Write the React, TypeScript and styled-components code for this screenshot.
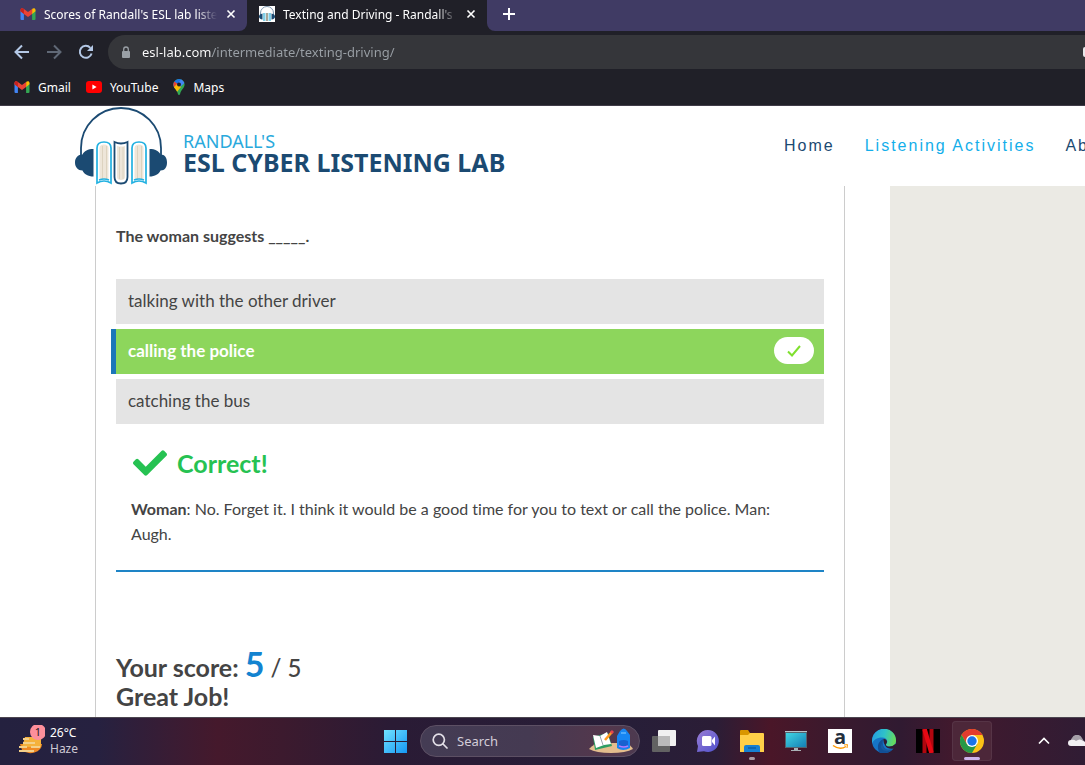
import React from 'react';
import styled, { createGlobalStyle, css } from 'styled-components';
import { FaCheck } from 'react-icons/fa';

const ui = `"Noto Sans", "Open Sans", sans-serif`;

const GlobalStyle = createGlobalStyle`
  *, *::before, *::after { box-sizing: border-box; }
  html, body { margin: 0; padding: 0; }
  body { background: #fff; overflow: hidden; font-family: Lato, sans-serif; font-variant-ligatures: none; color: #444; }
  button, input { font: inherit; color: inherit; border: 0; padding: 0; margin: 0; background: none; outline: 0; }
  svg { display: block; flex: none; }
  h1, h2, p, ul { margin: 0; padding: 0; }
`;

const Screen = styled.div`
  display: flex;
  flex-direction: column;
  height: 100vh;
  overflow: hidden;
`;

/* ---------- browser ---------- */

const Browser = styled.header`
  flex: none;
  background: #202028;
  border-bottom: 1px solid #403c48;
  color: #fff;
  font-family: ${ui};
  font-size: 12px;
  overflow: hidden;
`;

const TabStrip = styled.div`
  display: flex;
  height: 31px;
`;

const Tab = styled.div<{ $active?: boolean }>`
  display: flex;
  align-items: center;
  flex: none;
  width: ${p => (p.$active ? 240 : 247)}px;
  padding: 0 10px 3px ${p => (p.$active ? 12 : 20)}px;
  background: ${p => (p.$active ? '#202028' : '#403b64')};
  border-bottom-right-radius: ${p => (p.$active ? 0 : 8)}px;
`;

const TabTitle = styled.span`
  flex: 1;
  min-width: 0;
  margin: 0 8px;
  overflow: hidden;
  white-space: nowrap;
  mask-image: linear-gradient(to right, #000 88%, transparent 100%);
`;

const StripRest = styled.div`
  flex: 1;
  display: flex;
  align-items: center;
  padding: 0 0 3px 15px;
  background: #403b64;
  border-bottom-left-radius: 8px;
`;

const IconButton = styled.button`
  display: grid;
  place-items: center;
  flex: none;
  min-width: 12px;
  min-height: 12px;
`;

const Toolbar = styled.div`
  display: flex;
  align-items: center;
  gap: 16px;
  height: 42px;
  padding-left: 14px;
`;

const AddressBar = styled.form`
  display: flex;
  align-items: center;
  gap: 11px;
  flex: 1 0 auto;
  height: 34px;
  margin-left: -2px;
  padding-left: 13px;
  background: #35363a;
  border-radius: 17px 0 0 17px;
`;

const AddressInput = styled.input`
  flex: 1;
  min-width: 0;
  font-size: 13px;
  line-height: 20px;
  color: #e8e8ea;
  background: linear-gradient(to right, #fff 70px, #9aa0a6 70px);
  background-clip: text;
  -webkit-text-fill-color: transparent;
`;

const PillAction = styled.span`
  flex: none;
  width: 2px;
  height: 10px;
  background: #e8e8ea;
  border-radius: 2px 0 0 2px;
`;

const Bookmarks = styled.nav`
  display: flex;
  align-items: center;
  gap: 15px;
  height: 32px;
  padding: 0 0 4px 14px;
`;

const Bookmark = styled.a`
  display: flex;
  align-items: center;
  gap: 8px;
  color: #fff;
  text-decoration: none;
`;

/* ---------- site ---------- */

const Site = styled.div`
  flex: 1;
  min-height: 0;
  display: flex;
  flex-direction: column;
  overflow: hidden;
  background: #fff;
`;

const SiteHeader = styled.header`
  display: flex;
  align-items: center;
  justify-content: space-between;
  flex: none;
  height: 80px;
  padding-left: 74px;
`;

const Brand = styled.a`
  display: flex;
  align-items: center;
  gap: 15px;
  color: #1b4a72;
  text-decoration: none;
  font-family: "Noto Sans", sans-serif;
`;

const BrandText = styled.span`
  display: flex;
  flex-direction: column;
  padding-top: 12px;
  white-space: nowrap;
`;

const BrandTop = styled.span`
  font-size: 18px;
  line-height: 20px;
  color: #29a9dc;
`;

const BrandMain = styled.span`
  font-size: 25px;
  font-weight: 700;
  line-height: 23px;
`;

const SiteNav = styled.nav`
  display: flex;
  gap: 30px;
  flex: none;
  width: 301px;
  overflow: hidden;
  white-space: nowrap;
  font-family: "Liberation Sans", Arial, sans-serif;
  font-size: 16px;
  line-height: 24px;
  letter-spacing: 2px;
`;

const NavLink = styled.a<{ $current?: boolean }>`
  color: ${p => (p.$current ? '#13aeea' : '#1b4a72')};
  text-decoration: none;
`;

const Columns = styled.div`
  flex: 1;
  min-height: 0;
  display: flex;
  gap: 45px;
  padding-left: 95px;
`;

const Quiz = styled.main`
  flex: 0 1 750px;
  padding: 37px 20px 0;
  border: solid #ccc;
  border-width: 0 1px;
`;

const Sidebar = styled.aside`
  flex: 1 0 100px;
  background: #ebeae4;
`;

const Question = styled.p`
  font-size: 16px;
  font-weight: 700;
  line-height: 25px;
`;

const Options = styled.div`
  display: grid;
  gap: 5px;
  margin-top: 31px;
`;

const Option = styled.button<{ $correct?: boolean }>`
  display: flex;
  align-items: center;
  justify-content: space-between;
  height: 45px;
  padding: 0 10px 2px 12px;
  background: #e4e4e4;
  font-size: 17px;
  text-align: left;
  ${p =>
    p.$correct &&
    css`
      margin-left: -5px;
      border-left: 5px solid #1b76b8;
      background: #8dd65c;
      color: #fff;
      font-weight: 700;
    `}
`;

const Tick = styled.span`
  display: grid;
  place-items: center;
  width: 40px;
  height: 27px;
  border-radius: 14px;
  background: #fff;
`;

const Feedback = styled.section`
  padding: 21px 15px 24px;
  border-bottom: 2px solid #1e84c6;
`;

const Verdict = styled.h2`
  display: flex;
  align-items: center;
  gap: 10px;
  padding-left: 2px;
  font-size: 25px;
  line-height: 36px;
  color: #26c252;
`;

const Transcript = styled.p`
  margin-top: 15px;
  font-size: 16px;
  line-height: 25px;
`;

const Score = styled.h2`
  margin-top: 78px;
  font-size: 25px;
  line-height: 28px;
`;

const Points = styled.span`
  font-size: 34px;
  line-height: 28px;
  color: #1383d0;
`;

const Total = styled.span`
  font-size: 24px;
  font-weight: 500;
`;

/* ---------- taskbar ---------- */

const Taskbar = styled.footer`
  display: flex;
  align-items: center;
  gap: 4px;
  flex: none;
  height: 48px;
  overflow: hidden;
  box-shadow: inset 0 1px #4c4650;
  background: linear-gradient(to right, #24213f 0, #262140 9%, #45192c 20%, #3c1a2e 26%, #2a1b35 36%, #271e38 58%, #2b1d36 66%, #4a1628 71%, #3a1a2e 77%, #301a31 83%, #42192d 88%, #301c34 100%);
  font-family: ${ui};
  font-size: 12px;
  color: #fff;
`;

const Weather = styled.button`
  display: flex;
  align-items: center;
  gap: 5px;
  flex: none;
  width: 371px;
  padding-left: 17px;
  text-align: left;
  line-height: 16px;
`;

const WeatherText = styled.span`
  display: flex;
  flex-direction: column;
`;

const Muted = styled.span`
  color: #cfcad4;
`;

const TaskButton = styled.button<{ $open?: boolean; $focused?: boolean }>`
  position: relative;
  display: grid;
  place-items: center;
  flex: none;
  width: 40px;
  height: 40px;
  border-radius: 4px;
  ${p => p.$focused && css`background: #4c2739; box-shadow: inset 0 0 0 1px #563446;`}
  ${p =>
    p.$open &&
    css`
      &::after {
        content: '';
        position: absolute;
        bottom: 1px;
        width: ${p.$focused ? 16 : 6}px;
        height: 3px;
        border-radius: 2px;
        background: ${p.$focused ? '#cdb4ea' : '#a89aa4'};
      }
    `}
`;

const SearchBox = styled.label`
  display: flex;
  align-items: center;
  gap: 9px;
  flex: none;
  width: 220px;
  height: 32px;
  margin-left: 1px;
  padding: 0 5px 0 11px;
  border: 1px solid #5d5064;
  border-radius: 16px;
  background: linear-gradient(to right, #443c54, #453a52 50%, #54374c 85%, #4c3a50);
`;

const SearchInput = styled.input`
  flex: 1;
  min-width: 0;
  font-size: 13px;
  &::placeholder { color: #d3cdd8; opacity: 1; }
`;

const Tray = styled.div`
  display: flex;
  align-items: center;
  gap: 4px;
  margin-left: 28px;
`;

/* ---------- drawings ---------- */

const Gmail = () => (
  <svg width="16" height="12" viewBox="0 0 15 12">
    <path d="M0 2v9a1 1 0 0 0 1 1h2.4V4.5z" fill="#4285f4" />
    <path d="M15 2v9a1 1 0 0 1-1 1h-2.400V4.500z" fill="#34a853" />
    <path d="M11.600 1v4.900L15 3.300V2c0-1.900-2-2.400-3.400-1z" fill="#fbbc04" />
    <path d="M0 3.300V2C0 .1 2-.4 3.400 1l4.100 3 4.100-3v4.900L7.500 9 3.400 5.900z" fill="#ea4335" />
    <path d="M0 3.300V2C0 .6 1.200 0 2.300.4L3.400 1v4.900z" fill="#c5221f" />
  </svg>
);

const YouTube = () => (
  <svg width="16" height="12" viewBox="0 0 16 12">
    <rect width="16" height="12" rx="3" fill="#f00" />
    <path d="M6.400 3.500 10.600 6 6.400 8.500z" fill="#fff" />
  </svg>
);

const Maps = () => (
  <svg width="12" height="16" viewBox="0 0 12 16">
    <defs>
      <clipPath id="pin"><path d="M6 0a5.600 5.600 0 0 1 5.600 5.600c0 3.800-3.700 5.100-4.500 9.400-.2 1.300-2 1.300-2.200 0C4.100 10.700.4 9.400.4 5.600A5.600 5.600 0 0 1 6 0z" /></clipPath>
    </defs>
    <g clipPath="url(#pin)">
      <rect width="12" height="16" fill="#34a853" />
      <path d="M-1 12 12-2H0z" fill="#1a73e8" />
      <path d="M4 6 9-1h4v4L7 8z" fill="#4285f4" />
      <path d="M-1 1 5 5 0 10z" fill="#ea4335" />
      <path d="M0 9 4 5l4 3-5 6z" fill="#fbbc04" />
    </g>
    <circle cx="6" cy="5.500" r="2" fill="#202028" />
  </svg>
);

const Cross = () => (
  <svg width="10" height="10" viewBox="0 0 10 10" stroke="#fff" strokeWidth="1.600">
    <path d="m1.500 1.500 7 7m0-7-7 7" />
  </svg>
);

const Plus = () => (
  <svg width="14" height="14" viewBox="0 0 14 14" stroke="#fff" strokeWidth="2">
    <path d="M7 1v12M1 7h12" />
  </svg>
);

const Arrow = ({ forward }: { forward?: boolean }) => (
  <svg width="16" height="16" viewBox="0 0 16 16" fill="none" stroke={forward ? '#606876' : '#b4c8e6'} strokeWidth="2">
    {forward ? <path d="M1 8h13M8 1.500 14.500 8 8 14.500" /> : <path d="M15 8H2M8 1.500 1.500 8 8 14.500" />}
  </svg>
);

const Reload = () => (
  <svg width="16" height="16" viewBox="0 0 16 16">
    <path d="M13.600 9.500A6 6 0 1 1 12.300 3.800" fill="none" stroke="#b4c8e6" strokeWidth="2" />
    <path d="M15 1v6H9z" fill="#b4c8e6" />
  </svg>
);

const Lock = () => (
  <svg width="10" height="13" viewBox="0 0 10 13">
    <rect x="1" y="5" width="8" height="7" rx="1" fill="#9aa0a6" />
    <path d="M2.700 5V3.300a2.300 2.300 0 0 1 4.600 0V5" fill="none" stroke="#9aa0a6" strokeWidth="1.300" />
  </svg>
);

const Logo = () => (
  <svg width="94" height="80" viewBox="0 0 94 80">
    <path d="M7 52V42a40 40 0 0 1 80 0v10" fill="none" stroke="#1b4a72" strokeWidth="1.800" />
    <path d="M19.500 43v27.500C14 70.500 10 68 8.500 64.500 4 64.500 1 61 1 56.500s3-8 7.500-8C10 45 14 43 19.500 43z" fill="#1b4a72" />
    <path d="M75.500 43v27.500c5.500 0 9.500-2.500 11-6 4.500 0 6.500-3.500 6.500-8s-2-8-6.500-8c-1.500-3.500-5.500-5.500-11-5.500z" fill="#1b4a72" />
    <g fill="#fff" stroke="#22b1e1" strokeWidth="1.700">
      <path d="M23 77V42q0-6 7-6t7 6v35q-7-4-14 0z" />
      <path d="M58 77V42q0-6 7-6t7 6v35q-7-4-14 0z" />
    </g>
    <path d="M40.500 36q6.500 3 13 0v35q0 6.500-6.500 6.500t-6.500-6.500z" fill="#fff" stroke="#1b4a72" strokeWidth="1.800" />
    <path d="M25.500 42q0-3.500 4.500-3.500t4.500 3.500v31h-9zM60.500 42q0-3.500 4.500-3.500t4.500 3.500v31h-9zM43 40q4 1 8 0v31q0 3-4 3t-4-3z" fill="#eee6d9" />
    <path d="M28.500 40v33m4-33v33m31-33v33m4-33v33M45.500 41v32m3.500-32v32" stroke="#d8ceba" strokeWidth=".8" />
    <path d="M25 74q5-2 10 0M60 74q5-2 10 0" fill="none" stroke="#22b1e1" strokeWidth="1.500" />
  </svg>
);

const Favicon = () => (
  <svg width="16" height="16" viewBox="0 0 16 16">
    <rect width="16" height="16" fill="#fff" />
    <path d="M1.500 9V7a6.500 6.500 0 0 1 13 0v2" fill="none" stroke="#7c95ae" />
    <path d="M3.500 7.500v6Q0 13 0 10.500t3.500-3zM12.500 7.500v6Q16 13 16 10.500t-3.500-3z" fill="#1b4a72" />
    <path d="M4 7h2.500v8H4zM9.500 7H12v8H9.500z" fill="#82cfe8" />
    <path d="M7 7h2v8H7z" fill="#a8a699" />
  </svg>
);

const SmallCheck = () => (
  <svg width="14" height="12" viewBox="0 0 14 12" fill="none" stroke="#7fe02e" strokeWidth="2">
    <path d="m1 6.500 4 4L13 1" />
  </svg>
);

const HazeIcon = () => (
  <svg width="28" height="32" viewBox="0 0 28 32">
    <path d="M3 19h22a11.500 9.500 0 0 1-20 6z" fill="#f08a24" />
    <path d="M8 12h16v10H5z" fill="#f5b13b" />
    <path d="M6 14h6M6 18h12M2 22h8m4 0h9M2 26h15" stroke="#f4d08a" strokeWidth="2" />
    <circle cx="21" cy="7" r="8" fill="#fd8f9b" />
    <text x="21" y="11" textAnchor="middle" fontFamily="Noto Sans, sans-serif" fontSize="11" fill="#241820">1</text>
  </svg>
);

const WindowsIcon = () => (
  <svg width="24" height="24" viewBox="0 0 24 24">
    <defs>
      <linearGradient id="win" x1="0" y1="0" x2="1" y2="1" gradientUnits="objectBoundingBox">
        <stop offset="0" stopColor="#71e3ff" />
        <stop offset="1" stopColor="#1597f5" />
      </linearGradient>
    </defs>
    <path d="M1 1h11v11H1zM13 1h11v11H13zM1 13h11v11H1zM13 13h11v11H13z" fill="url(#win)" />
  </svg>
);

const Magnifier = () => (
  <svg width="16" height="16" viewBox="0 0 16 16" fill="none" stroke="#e4e0e8" strokeWidth="1.700" strokeLinecap="round">
    <circle cx="6.800" cy="6.800" r="5.600" />
    <path d="m11 11 4 4" />
  </svg>
);

const SchoolArt = () => (
  <svg width="46" height="26" viewBox="0 0 46 26">
    <path d="M1 21q5-6 12-6h24q6 2 8 6-7 4-22 4T1 21z" fill="#e3bd8d" />
    <path d="m5 9 7-2 8-2 4 13-17 4z" fill="#2d9d63" />
    <path d="m5 7 7 1 7-4 4 12-7 1-8 3z" fill="#fff" />
    <path d="m12 8 3 9" stroke="#9aa3ac" />
    <path d="m17 12 7-8" stroke="#ff9c1f" strokeWidth="2.500" />
    <path d="m23 5 2-2" stroke="#e7454e" strokeWidth="3" />
    <path d="M32 3q4-5 7 0l3 4v13q-7 4-13 0V8z" fill="#1685f3" />
    <path d="M31 13q5-2 9 0v6q-5 1-9 0z" fill="#1761d0" />
    <path d="M31 18q5 2 9 0" stroke="#b57bff" strokeWidth="1.500" fill="none" />
    <path d="M33 5h5" stroke="#61b7ff" strokeWidth="1.500" />
  </svg>
);

const TaskView = () => (
  <svg width="24" height="24" viewBox="0 0 24 24">
    <rect x="6" y="1" width="18" height="16" rx="1" fill="#f1f1f1" />
    <rect y="7" width="18" height="16" rx="1" fill="#626262" />
    <path d="M6 7h12v10H6z" fill="#bababa" />
  </svg>
);

const ChatIcon = () => (
  <svg width="24" height="24" viewBox="0 0 24 24">
    <defs>
      <linearGradient id="chat" x1="0" y1="0" x2="1" y2="1">
        <stop offset="0" stopColor="#9a7ed5" />
        <stop offset="1" stopColor="#4e50cd" />
      </linearGradient>
    </defs>
    <path d="M12 1a11 11 0 1 1-4 21.300L1 23l1-6A11 11 0 0 1 12 1z" fill="url(#chat)" />
    <rect x="6" y="7" width="9.500" height="10" rx="1.500" fill="#fff" />
    <path d="m16 11 3-3.500v9L16 13z" fill="#fff" />
  </svg>
);

const FolderIcon = () => (
  <svg width="24" height="24" viewBox="0 0 24 24">
    <path d="M0 2q0-1 1-1h7l2 3v4H0z" fill="#d99700" />
    <path d="M0 6h8l2-2h13q1 0 1 1v18H0z" fill="#ffcf48" />
    <path d="M4 23v-5q0-2 2-2h12q2 0 2 2v5z" fill="#1680d2" />
    <path d="M8 19h8" stroke="#0d5fa7" strokeWidth="1.500" />
  </svg>
);

const MonitorIcon = () => (
  <svg width="24" height="24" viewBox="0 0 24 24">
    <defs>
      <linearGradient id="screen" x1="0" y1="0" x2="1" y2="1">
        <stop offset="0" stopColor="#40d5e3" />
        <stop offset="1" stopColor="#157fb5" />
      </linearGradient>
    </defs>
    <path d="M1 2h22v17H1z" fill="#53626d" />
    <path d="M2 4h20v14H2z" fill="url(#screen)" />
    <path d="M1 2.500h22" stroke="#b9c3ca" />
    <path d="M10 19h4v2h3v1H7v-1h3z" fill="#aab1b6" />
  </svg>
);

const AmazonIcon = () => (
  <svg width="24" height="24" viewBox="0 0 24 24">
    <rect width="24" height="24" fill="#fff" />
    <text x="12" y="15" textAnchor="middle" fontFamily="Open Sans, sans-serif" fontWeight="700" fontSize="20" fill="#232f3e">a</text>
    <path d="M5 16.500q7 5 13 1" fill="none" stroke="#f90" strokeWidth="1.500" />
    <path d="m16 16 3.500-.4-.5 3.400" fill="none" stroke="#f90" />
  </svg>
);

const EdgeIcon = () => (
  <svg width="24" height="24" viewBox="0 0 24 24">
    <defs>
      <linearGradient id="edge" x1="0" y1=".3" x2="1" y2=".5">
        <stop offset="0" stopColor="#259ee1" />
        <stop offset=".5" stopColor="#2fc2c9" />
        <stop offset="1" stopColor="#68dc58" />
      </linearGradient>
    </defs>
    <circle cx="12" cy="12" r="12" fill="#1675c7" />
    <path d="M0 12A12 12 0 0 1 24 11.500c0 4-3 6-6.500 6-3 0-4.500-1.500-3-3 2-2.500 0-6-4.500-6C5 8.500 1 11 0 15z" fill="url(#edge)" />
    <path d="M8 24C4 19 6 12 11.500 10c-2 4-.5 11 6 11q2.500 0 4-1.500C18 24 12 25 8 24z" fill="#114f96" />
    <path d="M11.500 10C14 9.500 16 12 14.500 14.500c-1.500 1.500 0 3 3 3q3 0 5.800-2.500l1.700 1-2.500 3.500q-7 1-9-2.500-2.500-3-2-7z" fill="#301c31" />
    <path d="M10.500 13c-.5 5 3 8.300 7.500 7.500l2-.3C16 24 9 22 8.800 17z" fill="#17599f" />
  </svg>
);

const NetflixIcon = () => (
  <svg width="24" height="24" viewBox="0 0 24 24">
    <rect width="24" height="24" fill="#000" />
    <path d="M8.500 0v24M15.500 0v24" stroke="#b1060f" strokeWidth="4" />
    <path d="m8.500 0 7 24" stroke="#e50914" strokeWidth="4.500" />
  </svg>
);

const ChromeIcon = () => (
  <svg width="24" height="24" viewBox="0 0 24 24">
    <circle cx="12" cy="12" r="12" fill="#fbc116" />
    <path d="M1.600 6A12 12 0 0 1 22.400 6H12l-5.200 9z" fill="#e33b2e" />
    <path d="M1.600 6A12 12 0 0 0 12 24l5.200-9H6.800z" fill="#279847" />
    <circle cx="12" cy="12" r="6" fill="#fff" />
    <circle cx="12" cy="12" r="4.700" fill="#1a73e8" />
  </svg>
);

const Chevron = () => (
  <svg width="12" height="8" viewBox="0 0 12 8" fill="none" stroke="#fff" strokeWidth="1.700">
    <path d="m1 6.500 5-5 5 5" />
  </svg>
);

const CloudIcon = () => (
  <svg width="20" height="12" viewBox="0 0 20 12">
    <path d="M4 9a4 4 0 0 1 0-6 5.500 5.500 0 0 1 10 0l3 5z" fill="#a59fa8" />
    <path d="M3 11a3 3 0 0 1 0-6q3-1 5 1 4-3 7 0a3 3 0 0 1 2 5z" fill="#f2f0f3" />
  </svg>
);

/* ---------- page ---------- */

const answers = [
  { text: 'talking with the other driver' },
  { text: 'calling the police', correct: true },
  { text: 'catching the bus' },
];

const apps = [
  { name: 'Task View', icon: <TaskView /> },
  { name: 'Chat', icon: <ChatIcon /> },
  { name: 'File Explorer', icon: <FolderIcon />, open: true },
  { name: 'Desktop', icon: <MonitorIcon /> },
  { name: 'Amazon', icon: <AmazonIcon /> },
  { name: 'Microsoft Edge', icon: <EdgeIcon /> },
  { name: 'Netflix', icon: <NetflixIcon /> },
  { name: 'Google Chrome', icon: <ChromeIcon />, open: true, focused: true },
];

export default function App() {
  return (
    <Screen>
      <GlobalStyle />
      <Browser>
        <TabStrip>
          <Tab>
            <Gmail />
            <TabTitle>Scores of Randall's ESL lab listening</TabTitle>
            <IconButton aria-label="Close tab"><Cross /></IconButton>
          </Tab>
          <Tab $active>
            <Favicon />
            <TabTitle>Texting and Driving - Randall's ESL</TabTitle>
            <IconButton aria-label="Close tab"><Cross /></IconButton>
          </Tab>
          <StripRest>
            <IconButton aria-label="New tab"><Plus /></IconButton>
          </StripRest>
        </TabStrip>
        <Toolbar>
          <IconButton aria-label="Back"><Arrow /></IconButton>
          <IconButton aria-label="Forward"><Arrow forward /></IconButton>
          <IconButton aria-label="Reload"><Reload /></IconButton>
          <AddressBar>
            <Lock />
            <AddressInput aria-label="Address" defaultValue="esl-lab.com/intermediate/texting-driving/" />
            <PillAction />
          </AddressBar>
        </Toolbar>
        <Bookmarks>
          <Bookmark href="#gmail"><Gmail />Gmail</Bookmark>
          <Bookmark href="#youtube"><YouTube />YouTube</Bookmark>
          <Bookmark href="#maps"><Maps />Maps</Bookmark>
        </Bookmarks>
      </Browser>

      <Site>
        <SiteHeader>
          <Brand href="#top">
            <Logo />
            <BrandText>
              <BrandTop>RANDALL'S</BrandTop>
              <BrandMain>ESL CYBER LISTENING LAB</BrandMain>
            </BrandText>
          </Brand>
          <SiteNav>
            <NavLink href="#home">Home</NavLink>
            <NavLink href="#activities" $current>Listening Activities</NavLink>
            <NavLink href="#about">About</NavLink>
          </SiteNav>
        </SiteHeader>
        <Columns>
          <Quiz>
            <Question>The woman suggests _____.</Question>
            <Options>
              {answers.map(a => (
                <Option key={a.text} $correct={a.correct}>
                  {a.text}
                  {a.correct && <Tick><SmallCheck /></Tick>}
                </Option>
              ))}
            </Options>
            <Feedback>
              <Verdict><FaCheck size={34} />Correct!</Verdict>
              <Transcript>
                <b>Woman</b>: No. Forget it. I think it would be a good time for you to text or call the police. Man: Augh.
              </Transcript>
            </Feedback>
            <Score>
              Your score: <Points>5</Points> <Total>/ 5</Total>
              <br />
              Great Job!
            </Score>
          </Quiz>
          <Sidebar />
        </Columns>
      </Site>

      <Taskbar>
        <Weather>
          <HazeIcon />
          <WeatherText>
            <span>26°C</span>
            <Muted>Haze</Muted>
          </WeatherText>
        </Weather>
        <TaskButton aria-label="Start"><WindowsIcon /></TaskButton>
        <SearchBox>
          <Magnifier />
          <SearchInput placeholder="Search" aria-label="Search" />
          <SchoolArt />
        </SearchBox>
        {apps.map(a => (
          <TaskButton key={a.name} aria-label={a.name} $open={a.open} $focused={a.focused}>
            {a.icon}
          </TaskButton>
        ))}
        <Tray>
          <TaskButton aria-label="Show hidden icons"><Chevron /></TaskButton>
          <IconButton aria-label="OneDrive"><CloudIcon /></IconButton>
        </Tray>
      </Taskbar>
    </Screen>
  );
}
